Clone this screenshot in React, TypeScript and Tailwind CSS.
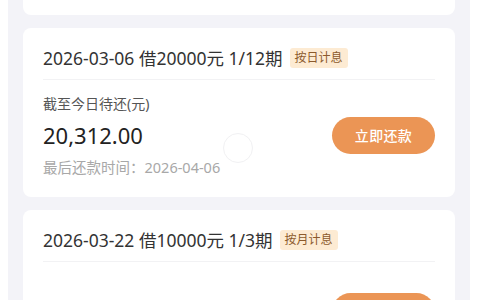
import React from 'react'

const font = { fontFamily: '"Noto Sans", "Noto Sans CJK SC", sans-serif' }

function Header({ date, amount, term, tag }: { date: string; amount: string; term: string; tag: string }) {
  return (
    <div className="flex items-center h-[24px] mt-[18px] mb-[9px]">
      <span className="text-[17.5px] leading-[24px] text-[#333333]">
        {date} 借{amount}元 {term}期
      </span>
      <span className="ml-[7px] h-[20px] px-[5px] rounded-[3px] bg-[#fdebd3] text-[#8c5a2c] text-[12px] leading-[20px]">
        {tag}
      </span>
    </div>
  )
}

export default function App() {
  return (
    <div className="w-[480px] h-[300px] overflow-hidden bg-white pl-[8px] pr-[10px]" style={font}>
      <div className="h-full bg-[#f3f3f8] px-[15px] flex flex-col gap-[13px]">
        {/* tail of the previous card */}
        <div className="h-[15px] shrink-0 bg-white rounded-b-lg" />

        {/* card 1 */}
        <div className="relative shrink-0 bg-white rounded-lg px-[20px] pb-[20px]">
          <div className="border-b border-[#f2f2f4]">
            <Header date="2026-03-06" amount="20000" term="1/12" tag="按日计息" />
          </div>
          <div className="flex items-center justify-between pt-[14px]">
            <div className="flex flex-col">
              <span className="text-[14px] leading-[20px] text-[#555555]">截至今日待还(元)</span>
              <span className="text-[22px] leading-[30px] mt-[6px] text-[#222222]">20,312.00</span>
              <span className="text-[14.5px] leading-[20px] mt-[7px] text-[#a8a8a8]">最后还款时间：2026-04-06</span>
            </div>
            <button className="w-[103px] h-[37px] rounded-full bg-[#eb9555] text-white text-[14px] font-medium tracking-wide">
              立即还款
            </button>
          </div>
          <div className="absolute left-[200px] top-[105px] w-[30px] h-[30px] rounded-full border border-[#f1f1f3]" />
        </div>

        {/* card 2 */}
        <div className="shrink-0 bg-white rounded-lg px-[20px] pb-[20px]">
          <div className="border-b border-[#f2f2f4]">
            <Header date="2026-03-22" amount="10000" term="1/3" tag="按月计息" />
          </div>
          <div className="flex items-center justify-between pt-[31px]">
            <span className="text-[20px] leading-[30px] font-medium text-[#222222]">17天后可还</span>
            <button className="w-[103px] h-[37px] rounded-full bg-[#eb9555] text-white text-[14px] font-medium tracking-wide">
              立即还款
            </button>
          </div>
        </div>
      </div>
    </div>
  )
}
